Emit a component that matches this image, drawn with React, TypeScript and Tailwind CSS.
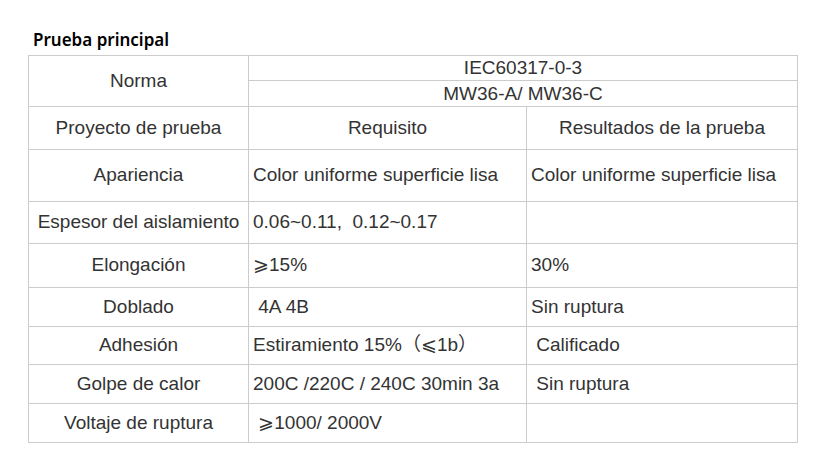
const rows: { name: string; req: string; res: string; h: string }[] = [
  { name: "Apariencia", req: "Color uniforme superficie lisa", res: "Color uniforme superficie lisa", h: "h-[52px]" },
  { name: "Espesor del aislamiento", req: "0.06~0.11,  0.12~0.17", res: "", h: "h-[42px]" },
  { name: "Elongación", req: "⩾15%", res: "30%", h: "h-[44px]" },
  { name: "Doblado", req: "\u00a04A 4B", res: "Sin ruptura", h: "h-[39px]" },
  { name: "Adhesión", req: "Estiramiento 15%（⩽1b）", res: "\u00a0Calificado", h: "h-[38px]" },
  { name: "Golpe de calor", req: "200C /220C / 240C 30min 3a", res: "\u00a0Sin ruptura", h: "h-[39px]" },
  { name: "Voltaje de ruptura", req: "\u00a0⩾1000/ 2000V", res: "", h: "h-[39px]" },
];

const cell = "border border-[#cccccc] px-1 align-middle";

export default function App() {
  return (
    <main className="min-h-screen bg-white px-7 pt-[29px] text-[#333333] font-['Liberation_Sans','Noto_Sans_CJK_SC',sans-serif] text-[19px]">
      <h2 className="pl-[5px] pb-[4px] text-[17px] leading-[22px] font-semibold text-black font-['Noto_Sans','Open_Sans',sans-serif]">
        Prueba principal
      </h2>
      <table className="w-[769px] table-fixed border-collapse">
        <colgroup>
          <col className="w-[220px]" />
          <col className="w-[278px]" />
          <col className="w-[271px]" />
        </colgroup>
        <tbody>
          <tr className="h-[25px]">
            <td rowSpan={2} className={`${cell} text-center`}>Norma</td>
            <td colSpan={2} className={`${cell} text-center leading-[20px]`}>IEC60317-0-3</td>
          </tr>
          <tr className="h-[26px]">
            <td colSpan={2} className={`${cell} text-center leading-[20px]`}>MW36-A/ MW36-C</td>
          </tr>
          <tr className="h-[43px]">
            <td className={`${cell} text-center`}>Proyecto de prueba</td>
            <td className={`${cell} text-center`}>Requisito</td>
            <td className={`${cell} text-center`}>Resultados de la prueba</td>
          </tr>
          {rows.map((r) => (
            <tr key={r.name} className={r.h}>
              <td className={`${cell} text-center whitespace-nowrap`}>{r.name}</td>
              <td className={`${cell} whitespace-pre`}>{r.req}</td>
              <td className={`${cell} whitespace-pre`}>{r.res}</td>
            </tr>
          ))}
        </tbody>
      </table>
    </main>
  );
}
